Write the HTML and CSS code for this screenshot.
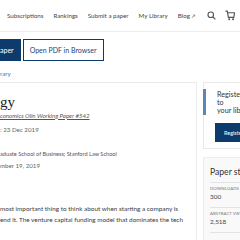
FILE: index.html
```html
<!DOCTYPE html>
<html lang="en">
<head>
  <meta charset="UTF-8">
  <meta name="viewport" content="width=device-width, initial-scale=1">
  <title>SSRN - Paper</title>
  <link rel="stylesheet" href="styles.css">
</head>
<body>
  <header class="topbar">
    <nav class="nav">
      <a href="#">Subscriptions</a>
      <a href="#">Rankings</a>
      <a href="#">Submit a paper</a>
      <a href="#">My Library</a>
      <a href="#">Blog <span class="ext">&#8599;</span></a>
    </nav>
    <div class="tools">
      <svg width="9" height="9" viewBox="0 0 12 12"><circle cx="5" cy="5" r="3.7" fill="none" stroke="#555" stroke-width="1.5"/><path d="M7.8 7.8l3.4 3.4" stroke="#555" stroke-width="1.6"/></svg>
      <svg width="10" height="11" viewBox="0 0 12 13"><path d="M0.5 1.2h2.2l1.4 7.6h6.4l1-5.6H3" fill="none" stroke="#555" stroke-width="1.4"/><circle cx="5" cy="11" r="1.2" fill="#555"/><circle cx="9.6" cy="11" r="1.2" fill="#555"/></svg>
    </div>
  </header>

  <div class="actions">
    <a href="#" class="btn btn-solid">aper</a>
    <a href="#" class="btn btn-outline">Open PDF in Browser</a>
  </div>
  <a href="#" class="lib-link">rary</a>

  <div class="layout">
    <main class="paper">
      <h1 class="title">gy</h1>
      <p class="series">conomics Olin Working Paper #542</p>
      <p class="meta">: 23 Dec 2019</p>
      <p class="affil">aduate School of Business; Stanford Law School</p>
      <p class="meta">mber 19, 2019</p>
      <p class="abstract">most important thing to think about when starting a company is<br>end it. The venture capital funding model that dominates the tech</p>
    </main>

    <aside class="side">
      <div class="card register">
        <p class="register-text">Register to save articles<br>to<br>your library</p>
        <a href="#" class="btn btn-solid btn-small">Register</a>
      </div>

      <div class="card stats">
        <h2>Paper statistics</h2>
        <div class="stat">
          <span class="stat-label">Downloads</span>
          <span class="stat-value">300</span>
        </div>
        <div class="stat">
          <span class="stat-label">Abstract Views</span>
          <span class="stat-value">2,518</span>
        </div>
        <div class="stat"></div>
      </div>
    </aside>
  </div>
</body>
</html>
```

FILE: styles.css
```css
body {
  font-family: 'Lato', 'Liberation Sans', sans-serif;
  background: #fff;
  color: #333;
  margin: 0;
  width: 240px;
  height: 240px;
  overflow: hidden;
}

a {
  text-decoration: none;
  color: inherit;
}

p, h1, h2 {
  margin: 0;
}

.topbar {
  display: flex;
  align-items: center;
  height: 31px;
  padding-left: 7px;
  border-bottom: 1px solid #ededed;
}

.nav {
  display: flex;
  gap: 10px;
  font-size: 6.2px;
  color: #444;
  white-space: nowrap;
}

.nav .ext {
  font-size: 5px;
}

.tools {
  display: flex;
  align-items: center;
  gap: 9px;
  margin-left: auto;
  padding-right: 5px;
}

.actions {
  display: flex;
  gap: 2px;
  margin-top: 7px;
}

.btn {
  display: flex;
  align-items: center;
  height: 22px;
  box-sizing: border-box;
  font-size: 7px;
  white-space: nowrap;
}

.btn-solid {
  background: #0c3b6c;
  color: #fff;
  padding: 0 7px 0 0;
}

.btn-outline {
  border: 1px solid #0c3b6c;
  color: #1d4570;
  padding: 0 6px;
}

.lib-link {
  display: block;
  margin: 9px 0 4px;
  font-size: 6.2px;
  line-height: 8px;
  color: #2a7ccc;
}

.layout {
  display: flex;
  gap: 6px;
  margin-left: -10px;
}

.paper {
  flex: 0 0 207px;
  box-sizing: border-box;
  border: 1px solid #ebebeb;
  border-bottom: none;
  padding: 11px 0 0 9px;
  height: 170px;
}

.title {
  font-family: 'Liberation Serif', serif;
  font-weight: normal;
  font-size: 15px;
  line-height: 16px;
  color: #222;
}

.series {
  margin-top: 1.5px;
  font-size: 6.1px;
  line-height: 8px;
  font-style: italic;
  text-decoration: underline;
  color: #555;
}

.meta {
  margin-top: 6.5px;
  font-size: 6.2px;
  line-height: 8px;
  color: #666;
}

.affil {
  margin-top: 16px;
  font-size: 5.6px;
  line-height: 8px;
  color: #555;
}

.affil + .meta {
  margin-top: 4px;
}

.abstract {
  margin-top: 33px;
  font-size: 6.4px;
  line-height: 11px;
  color: #3a3a3a;
  white-space: nowrap;
}

.side {
  flex: 0 0 140px;
}

.card {
  border: 1px solid #e8e8e8;
  box-sizing: border-box;
}

.register {
  padding: 6px 0 6px 0;
}

.register-text {
  margin-left: -1px;
  padding: 2px 0 0 11px;
  border-left: 3px solid #5b87b7;
  font-size: 7.2px;
  line-height: 8px;
  color: #333;
  white-space: nowrap;
}

.btn-small {
  margin: 8px 0 0 11px;
  height: 19px;
  width: 60px;
  padding: 0 0 0 9px;
  font-size: 5.5px;
}

.stats {
  margin-top: 8px;
  background: #f9f9f9;
  border-color: #eeeeee;
  padding: 8px 0 0 6px;
}

.stats h2 {
  font-weight: normal;
  font-size: 8.6px;
  line-height: 12px;
  margin-bottom: 4px;
  color: #333;
  white-space: nowrap;
}

.stat {
  display: flex;
  flex-direction: column;
  border-top: 1px solid #e3e3e3;
  padding: 3px 0 5px;
}

.stat-label {
  font-size: 4.4px;
  line-height: 6px;
  text-transform: uppercase;
  color: #777;
  white-space: nowrap;
}

.stat-value {
  font-size: 6.4px;
  line-height: 10px;
  color: #444;
}
```
